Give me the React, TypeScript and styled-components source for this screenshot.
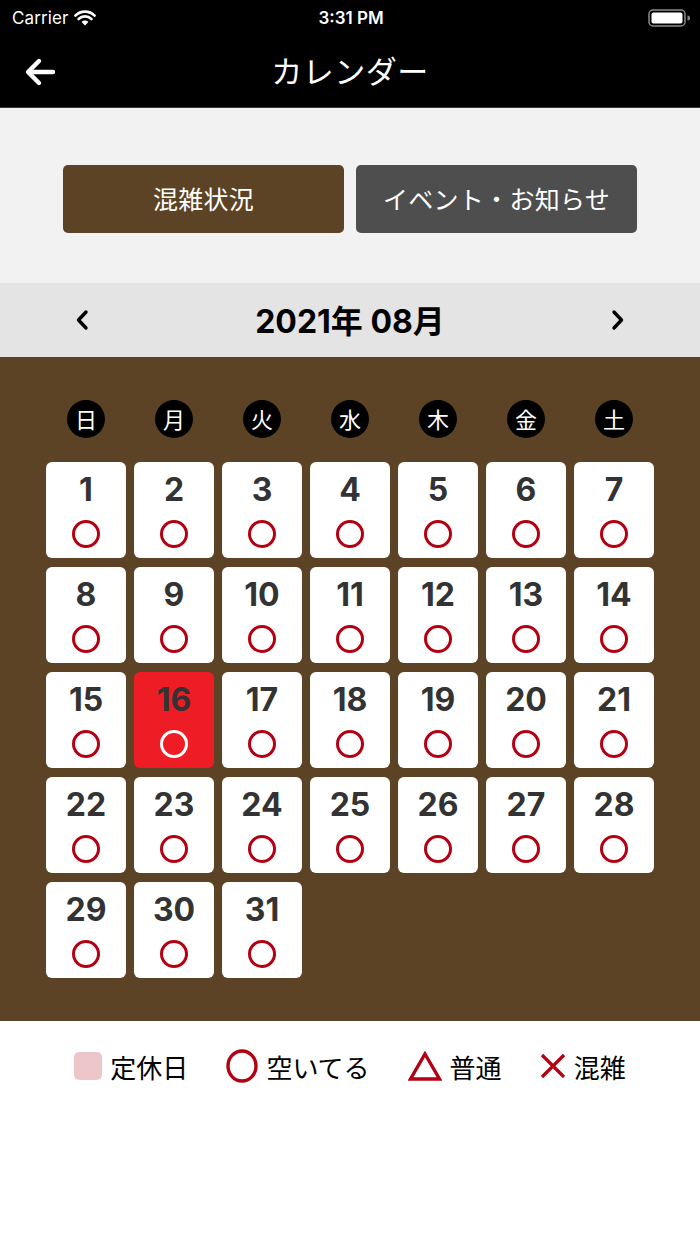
import React from "react";
import styled, { createGlobalStyle } from "styled-components";

const GlobalStyle = createGlobalStyle`
  html, body { margin: 0; padding: 0; background: #ffffff; }
  body { font-family: Inter, "Noto Sans CJK JP", sans-serif; }
  * { box-sizing: border-box; }
`;

const JP = `"Noto Sans CJK JP", "Noto Sans", sans-serif`;
const BROWN = "#5d4326";
const RED = "#b30012";

const Page = styled.div`
  width: 700px;
  min-height: 1244px;
  background: #ffffff;
  display: flex;
  flex-direction: column;
`;

const Header = styled.header`
  background: #000;
  color: #fff;
  border-bottom: 1px solid #3a3a3a;
`;

const StatusBar = styled.div`
  height: 36px;
  display: grid;
  grid-template-columns: 1fr auto 1fr;
  align-items: center;
  padding: 0 10px 0 12px;
  font-family: Inter, "Liberation Sans", sans-serif;
  font-size: 17px;
`;

const Carrier = styled.div`
  display: flex;
  align-items: center;
  gap: 6px;
  letter-spacing: 0.1px;
`;

const Time = styled.div`
  font-weight: 600;
`;

const Battery = styled.div`
  justify-self: end;
  display: flex;
  align-items: center;
`;

const NavBar = styled.div`
  height: 71px;
  display: grid;
  grid-template-columns: 1fr auto 1fr;
  align-items: center;
  padding: 0 24px;
`;

const Title = styled.h1`
  margin: 0;
  font-family: ${JP};
  font-weight: 400;
  font-size: 31px;
  letter-spacing: 0.5px;
  padding-bottom: 5px;
`;

const Tabs = styled.div`
  background: #f2f2f2;
  padding: 57px 63px 50px;
  display: flex;
  gap: 12px;
`;

const TabButton = styled.button<{ $active?: boolean }>`
  flex: 1;
  height: 68px;
  border: none;
  border-radius: 5px;
  background: ${(p) => (p.$active ? BROWN : "#4e4e4e")};
  color: #fff;
  font-family: ${JP};
  font-size: 25px;
  font-weight: 400;
  letter-spacing: 0.3px;
  padding: 0 0 3px;
`;

const MonthBar = styled.div`
  height: 74px;
  background: #e4e4e4;
  display: flex;
  align-items: center;
  justify-content: space-between;
  padding: 0 74px;
`;

const MonthTitle = styled.div`
  font-family: Inter, ${JP};
  font-weight: 700;
  font-size: 32px;
  color: #000;
  padding-bottom: 3px;
`;

const Chevron = styled.span`
  display: flex;
  width: 16px;
  justify-content: center;
`;

const CalendarArea = styled.section`
  background: ${BROWN};
  padding: 43px 46px 43px;
`;

const WeekRow = styled.div`
  display: grid;
  grid-template-columns: repeat(7, 1fr);
  gap: 8px;
  margin-bottom: 24px;
`;

const WeekDay = styled.div`
  justify-self: center;
  width: 38px;
  height: 38px;
  border-radius: 50%;
  background: #000;
  color: #fff;
  font-family: ${JP};
  font-size: 22px;
  line-height: 1;
  display: flex;
  align-items: center;
  justify-content: center;
  padding-bottom: 2px;
`;

const DayGrid = styled.div`
  display: grid;
  grid-template-columns: repeat(7, 1fr);
  grid-auto-rows: 96px;
  column-gap: 8px;
  row-gap: 9px;
`;

const DayCell = styled.div<{ $today?: boolean }>`
  background: ${(p) => (p.$today ? "#ee1c24" : "#ffffff")};
  border-radius: 6px;
  display: flex;
  flex-direction: column;
  align-items: center;
  padding-top: 12px;
`;

const DayNumber = styled.div`
  font-family: Inter, "Liberation Sans", sans-serif;
  font-weight: 700;
  font-size: 32px;
  line-height: 32px;
  color: #333333;
  height: 32px;
`;

const StatusMark = styled.div<{ $color: string }>`
  margin-top: 14px;
  width: 28px;
  height: 28px;
  border-radius: 50%;
  border: 3px solid ${(p) => p.$color};
`;

const Legend = styled.div`
  display: flex;
  justify-content: center;
  align-items: center;
  gap: 38px;
  padding: 27px 0 0 0;
`;

const LegendItem = styled.div`
  display: flex;
  align-items: center;
  gap: 8px;
  font-family: ${JP};
  font-size: 26px;
  color: #000;
  height: 36px;
`;

const HolidaySwatch = styled.span`
  width: 28px;
  height: 28px;
  border-radius: 5px;
  background: #ecc6c9;
`;

const days = Array.from({ length: 31 }, (_, i) => i + 1);
const weekdays = ["日", "月", "火", "水", "木", "金", "土"];

export default function App() {
  return (
    <Page>
      <GlobalStyle />
      <Header>
        <StatusBar>
          <Carrier>
            Carrier
            <svg width="22" height="16" viewBox="0 0 22 16">
              <path d="M11 15.5 L7.6 12 A4.8 4.8 0 0 1 14.4 12 Z" fill="#fff" />
              <path d="M4.6 9 A9 9 0 0 1 17.4 9" stroke="#fff" strokeWidth="2.6" fill="none" strokeLinecap="round" />
              <path d="M1.4 5.6 A13.6 13.6 0 0 1 20.6 5.6" stroke="#fff" strokeWidth="2.6" fill="none" strokeLinecap="round" />
            </svg>
          </Carrier>
          <Time>3:31 PM</Time>
          <Battery>
            <svg width="42" height="20" viewBox="0 0 42 20">
              <rect x="1" y="2" width="36" height="16" rx="4" fill="none" stroke="#8a8a8a" strokeWidth="1.5" />
              <rect x="3.5" y="4.5" width="31" height="11" rx="2" fill="#fff" />
              <path d="M39.5 7.5 A2.5 2.5 0 0 1 39.5 12.5 Z" fill="#8a8a8a" />
            </svg>
          </Battery>
        </StatusBar>
        <NavBar>
          <svg width="32" height="30" viewBox="0 0 32 30">
            <path d="M29 15 H5 M15 4 L4 15 L15 26" stroke="#fff" strokeWidth="4.4" fill="none" strokeLinecap="round" strokeLinejoin="round" />
          </svg>
          <Title>カレンダー</Title>
          <span />
        </NavBar>
      </Header>

      <Tabs>
        <TabButton $active>混雑状況</TabButton>
        <TabButton>イベント・お知らせ</TabButton>
      </Tabs>

      <MonthBar>
        <Chevron>
          <svg width="14" height="22" viewBox="0 0 14 22">
            <path d="M11 3 L3.5 11 L11 19" stroke="#000" strokeWidth="3.4" fill="none" strokeLinecap="round" strokeLinejoin="round" />
          </svg>
        </Chevron>
        <MonthTitle>2021年 08月</MonthTitle>
        <Chevron>
          <svg width="14" height="22" viewBox="0 0 14 22">
            <path d="M3 3 L10.5 11 L3 19" stroke="#000" strokeWidth="3.4" fill="none" strokeLinecap="round" strokeLinejoin="round" />
          </svg>
        </Chevron>
      </MonthBar>

      <CalendarArea>
        <WeekRow>
          {weekdays.map((w) => (
            <WeekDay key={w}>{w}</WeekDay>
          ))}
        </WeekRow>
        <DayGrid>
          {days.map((d) => {
            const today = d === 16;
            return (
              <DayCell key={d} $today={today}>
                <DayNumber>{d}</DayNumber>
                <StatusMark $color={today ? "#ffffff" : RED} />
              </DayCell>
            );
          })}
        </DayGrid>
      </CalendarArea>

      <Legend>
        <LegendItem>
          <HolidaySwatch />
          定休日
        </LegendItem>
        <LegendItem>
          <svg width="32" height="34" viewBox="0 0 32 34">
            <ellipse cx="16" cy="17" rx="14" ry="15" fill="none" stroke={RED} strokeWidth="3.4" />
          </svg>
          空いてる
        </LegendItem>
        <LegendItem>
          <svg width="34" height="30" viewBox="0 0 34 30">
            <path d="M17 3 L31.5 28 H2.5 Z" fill="none" stroke={RED} strokeWidth="3.4" strokeLinejoin="miter" />
          </svg>
          普通
        </LegendItem>
        <LegendItem>
          <svg width="26" height="26" viewBox="0 0 26 26">
            <path d="M2 2 L24 24 M24 2 L2 24" stroke={RED} strokeWidth="3.2" fill="none" />
          </svg>
          混雑
        </LegendItem>
      </Legend>
    </Page>
  );
}
